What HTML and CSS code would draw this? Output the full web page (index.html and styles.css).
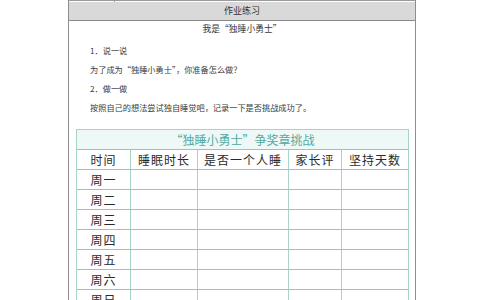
FILE: index.html
```html
<!DOCTYPE html>
<html lang="zh-CN">
<head>
<meta charset="utf-8">
<title>作业练习</title>
<link rel="stylesheet" href="styles.css">
</head>
<body>
<div class="sheet">
  <div class="stub"><span class="stub-cell"></span></div>
  <div class="band">作业练习</div>
  <div class="content">
    <div class="line center title">我是“独睡小勇士”</div>
    <div class="line">1．说一说</div>
    <div class="line">为了成为“独睡小勇士”，你准备怎么做？</div>
    <div class="line">2．做一做</div>
    <div class="line last">按照自己的想法尝试独自睡觉吧，记录一下是否挑战成功了。</div>
    <div class="grid">
      <div class="cell caption">“独睡小勇士”争奖章挑战</div>
      <div class="cell">时间</div>
      <div class="cell">睡眠时长</div>
      <div class="cell">是否一个人睡</div>
      <div class="cell">家长评</div>
      <div class="cell">坚持天数</div>
      <div class="cell">周一</div><div class="cell"></div><div class="cell"></div><div class="cell"></div><div class="cell"></div>
      <div class="cell">周二</div><div class="cell"></div><div class="cell"></div><div class="cell"></div><div class="cell"></div>
      <div class="cell">周三</div><div class="cell"></div><div class="cell"></div><div class="cell"></div><div class="cell"></div>
      <div class="cell">周四</div><div class="cell"></div><div class="cell"></div><div class="cell"></div><div class="cell"></div>
      <div class="cell">周五</div><div class="cell"></div><div class="cell"></div><div class="cell"></div><div class="cell"></div>
      <div class="cell">周六</div><div class="cell"></div><div class="cell"></div><div class="cell"></div><div class="cell"></div>
      <div class="cell">周日</div><div class="cell"></div><div class="cell"></div><div class="cell"></div><div class="cell"></div>
    </div>
  </div>
</div>
</body>
</html>
```

FILE: styles.css
```css
* { box-sizing: border-box; }
html, body { margin: 0; padding: 0; background: #ffffff; }
body {
  font-family: "Noto Sans CJK SC", "Noto Sans", sans-serif;
  color: #333;
  overflow: hidden;
  height: 300px;
}
.sheet {
  margin-left: 68px;
  width: 348px;
  min-height: 340px;
  border-left: 1px solid #8e8e8e;
  border-right: 1px solid #8e8e8e;
}
.stub {
  height: 2px;
  border-top: 1px solid #9a9a9a;
  display: flex;
}
.stub-cell {
  width: 46px;
  height: 1px;
  border-right: 1px solid #9a9a9a;
}
.band {
  height: 19px;
  background: #d9d9d9;
  border-bottom: 1px solid #8a8a8a;
  text-align: center;
  font-size: 9px;
  line-height: 18px;
  color: #333;
}
.content {
  display: flex;
  flex-direction: column;
  padding-top: 2px;
}
.line {
  font-size: 8.2px;
  line-height: 12px;
  height: 12px;
  padding-left: 21px;
  margin-bottom: 7px;
  white-space: nowrap;
  color: #3a3a3a;
}
.line.center { text-align: center; padding-left: 0; font-size: 8.8px; }
.line.title { margin-bottom: 9px; }
.line.last { margin-bottom: 0; }
.grid {
  margin-top: 16px;
  margin-left: 7px;
  width: 333px;
  display: grid;
  grid-template-columns: 54px 67px 91px 53px 67px;
  grid-auto-rows: 20px;
  border-left: 1px solid #a6d4cb;
  border-top: 1px solid #a6d4cb;
}
.cell {
  border-right: 1px solid #a6d4cb;
  border-bottom: 1px solid #8fc8bc;
  font-size: 12px;
  line-height: 19px;
  text-align: center;
  letter-spacing: 1px;
  color: #2a2a2a;
  white-space: nowrap;
}
.caption {
  grid-column: 1 / -1;
  background: #eef8f6;
  color: #54a99e;
  letter-spacing: 0;
}
```
